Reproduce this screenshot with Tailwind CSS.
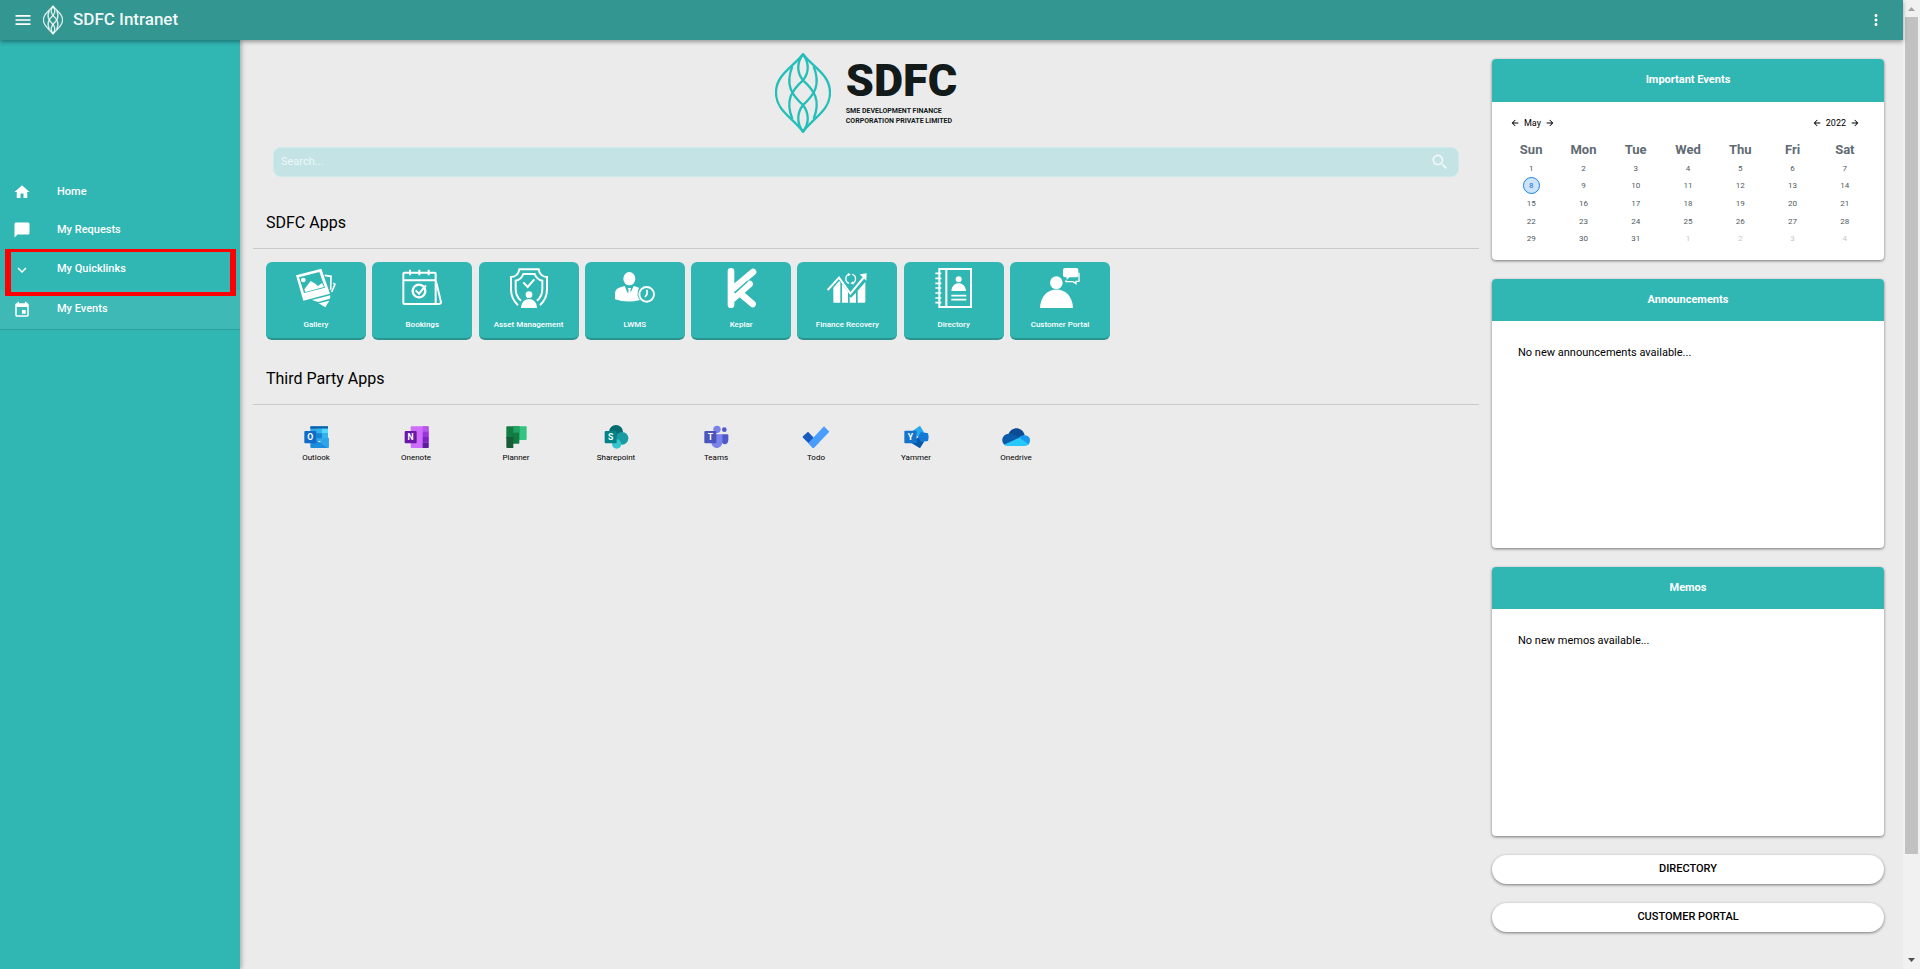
<!DOCTYPE html>
<html lang="en">
<head>
<meta charset="utf-8">
<meta name="viewport" content="width=device-width, initial-scale=1">
<title>SDFC Intranet</title>
<script src="https://cdn.jsdelivr.net/npm/@tailwindcss/browser@4"></script>
</head>
<body class="flex h-screen flex-col overflow-hidden bg-[#ebebeb] font-['Roboto',sans-serif] text-black">
<svg class="hidden" aria-hidden="true">
  <symbol id="leaf" viewBox="0 0 168 240">
    <g fill="none" stroke="currentColor">
      <path d="M84 4C50 46 3 66 3 119S50 192 84 236C118 192 165 172 165 119S118 46 84 4Z"/>
      <path d="M84 4C64 30 66 60 84 82C118 112 138 142 116 198"/>
      <path d="M84 4C104 30 102 60 84 82C50 112 30 142 52 198"/>
      <path d="M84 236C64 210 66 180 84 156C118 126 138 96 116 40"/>
      <path d="M84 236C104 210 102 180 84 156C50 126 30 96 52 40"/>
    </g>
  </symbol>
  <symbol id="left" viewBox="0 0 24 24"><path fill="currentColor" d="M20 11H7.83l5.59-5.59L12 4l-8 8 8 8 1.41-1.41L7.83 13H20v-2z"/></symbol>
  <symbol id="right" viewBox="0 0 24 24"><path fill="currentColor" d="M12 4l-1.41 1.41L16.17 11H4v2h12.17l-5.58 5.59L12 20l8-8z"/></symbol>
</svg>

<div class="flex min-h-0 flex-1">
  <div class="flex min-w-0 flex-1 flex-col">
    <header class="relative z-10 flex h-10 shrink-0 items-center bg-[#339691] pr-[19px] pl-[13px] text-white shadow-[0_2px_4px_rgba(0,0,0,0.35)]">
      <button aria-label="Open menu" class="flex size-5 items-center justify-center">
        <svg class="size-5" viewBox="0 0 24 24"><path fill="currentColor" d="M3 18h18v-2H3v2zm0-5h18v-2H3v2zm0-7v2h18V6H3z"/></svg>
      </button>
      <svg class="ml-[10px] h-[30px] w-5 text-white/80 [stroke-width:12]" aria-hidden="true"><use href="#leaf"/></svg>
      <h1 class="ml-[10px] flex-1 text-[17px] font-medium text-white/95">SDFC Intranet</h1>
      <button aria-label="More options" class="flex size-4 items-center justify-center">
        <svg class="size-[18px] shrink-0" viewBox="0 0 24 24"><path fill="currentColor" d="M12 8c1.1 0 2-.9 2-2s-.9-2-2-2-2 .9-2 2 .9 2 2 2zm0 2c-1.1 0-2 .9-2 2s.9 2 2 2 2-.9 2-2-.9-2-2-2zm0 6c-1.1 0-2 .9-2 2s.9 2 2 2 2-.9 2-2-.9-2-2-2z"/></svg>
      </button>
    </header>

    <div class="flex min-h-0 flex-1">
      <nav class="relative w-60 shrink-0 bg-[#30b6b3] pt-[133px] text-[11px] font-medium text-white shadow-[2px_0_4px_rgba(0,0,0,0.25)]">
        <a href="#" class="flex h-[38px] items-center gap-[26px] pl-[13px]">
          <svg class="size-[18px]" viewBox="0 0 24 24"><path fill="currentColor" d="M10 20v-6h4v6h5v-8h3L12 3 2 12h3v8z"/></svg>Home</a>
        <a href="#" class="flex h-[38px] items-center gap-[26px] pl-[13px]">
          <svg class="size-[18px]" viewBox="0 0 24 24"><path fill="currentColor" d="M20 2H4c-1.100 0-2 .9-2 2v18l4-4h14c1.100 0 2-.9 2-2V4c0-1.100-.9-2-2-2z"/></svg>My Requests</a>
        <div class="relative h-[41px]">
          <a href="#" class="flex h-full items-center gap-[26px] pl-[13px]">
            <svg class="size-[18px]" viewBox="0 0 24 24"><path fill="currentColor" d="M7.410 8.590L12 13.170l4.590-4.580L18 10l-6 6-6-6z"/></svg>My Quicklinks</a>
          <span class="pointer-events-none absolute top-0 right-1 left-[5px] z-10 h-[47px] border-x-[6px] border-t-[3px] border-b-4 border-[#fe0000]"></span>
        </div>
        <a href="#" class="flex h-10 items-center gap-[26px] border-b border-[#2a9f9c] bg-[#3eb9b6] pl-[13px]">
          <svg class="size-[18px]" viewBox="0 0 24 24"><path fill="currentColor" d="M17 12h-5v5h5v-5zM16 1v2H8V1H6v2H5c-1.110 0-1.990.9-1.990 2L3 19c0 1.100.89 2 2 2h14c1.100 0 2-.9 2-2V5c0-1.100-.9-2-2-2h-1V1h-2zm3 18H5V8h14v11z"/></svg>My Events</a>
      </nav>

      <main class="flex min-w-0 flex-1 gap-[13px] pr-[19px] pl-[13px]">
        <div class="min-w-0 flex-1">
          <div class="flex items-center justify-center gap-[15px] pt-[13px]">
            <svg class="h-20 w-14 text-[#25bfb9] [stroke-width:7]" aria-hidden="true"><use href="#leaf"/></svg>
            <div class="text-[#131a1a]">
              <div class="text-[45px]/[42px] font-black">SDFC</div>
              <div class="pt-1 text-[7px]/[10px] font-bold whitespace-nowrap">SME DEVELOPMENT FINANCE<br>CORPORATION PRIVATE LIMITED</div>
            </div>
          </div>

          <form class="mx-5 mt-[14px] flex h-[30px] items-center rounded-lg border border-[#cdebec] bg-[#c3e3e5] pr-2 pl-[7px] text-white">
            <input type="search" aria-label="Search" placeholder="Search..." class="min-w-0 flex-1 bg-transparent text-[11px] outline-none placeholder:text-white/75">
            <button type="button" aria-label="Search" class="size-5 text-white/75">
              <svg class="size-5" viewBox="0 0 24 24"><path fill="currentColor" d="M15.500 14h-.79l-.28-.27C15.410 12.590 16 11.110 16 9.500 16 5.910 13.090 3 9.500 3S3 5.910 3 9.500 5.910 16 9.500 16c1.610 0 3.090-.59 4.230-1.570l.27.28v.79l5 4.990L20.490 19l-4.990-5zm-6 0C7.010 14 5 11.990 5 9.500S7.010 5 9.500 5 14 7.010 14 9.500 11.990 14 9.500 14z"/></svg>
            </button>
          </form>

          <section>
            <h2 class="mt-[34px] px-[13px] text-base/6">SDFC Apps</h2>
            <hr class="mt-[13px] border-[#cacaca]">
            <div class="ml-[13px] mt-[13px] flex max-w-[844px] justify-between text-[8px]/[10px] font-medium text-white">
              <a href="#" class="flex h-[78px] w-[100px] flex-col items-center justify-between rounded-md border-b-2 border-[#2a938f] bg-[#30b6b3] pt-1.5 pb-2">
                <svg class="size-10" viewBox="0 0 120 120" fill="currentColor"><path fill-rule="evenodd" d="M0 22L76 2L102 77L22 98ZM9 28L24 75L87 59L70 12Z"/><path d="M25 64L44 39L56 46L66 54L78 45L84 57L28 72Z"/><circle cx="22" cy="36" r="7"/><path fill="none" stroke="currentColor" stroke-width="5" d="M86 22L105 25L104 65M112 46L117 49L107 72"/><path d="M48 96L103 82L102 92L66 102ZM68 106L100 98L88 118Z"/></svg>
                Gallery</a>
              <a href="#" class="flex h-[78px] w-[100px] flex-col items-center justify-between rounded-md border-b-2 border-[#2a938f] bg-[#30b6b3] pt-1.5 pb-2">
                <svg class="size-10" viewBox="0 0 120 120" fill="none" stroke="currentColor" stroke-width="6"><rect x="4" y="14" width="97" height="94" rx="3"/><path d="M4 37H101M24 5V22M52 5V22M80 5V22M102 40L117 102Q117 108 110 108H95"/><circle cx="51" cy="69" r="19" stroke-width="7"/><path d="M41 67L51 77L72 52"/></svg>
                Bookings</a>
              <a href="#" class="flex h-[78px] w-[100px] flex-col items-center justify-between rounded-md border-b-2 border-[#2a938f] bg-[#30b6b3] pt-1.5 pb-2">
                <svg class="size-10" viewBox="0 0 120 120" fill="none" stroke="currentColor" stroke-width="6"><path d="M27 112C12 98 6 84 6 64V27C20 27 29 17 31 4H89C91 17 100 27 114 27V64C114 84 108 98 93 112"/><path d="M36 98C24 88 20 78 20 62V38C31 36 39 29 43 18H77C81 29 89 36 100 38V62C100 78 96 88 84 98"/><path d="M43 43L56 57L76 34"/><circle cx="60" cy="80" r="10" fill="currentColor" stroke="none"/><path fill="currentColor" stroke="none" d="M36 120C37 84 83 84 84 120Z"/></svg>
                Asset Management</a>
              <a href="#" class="flex h-[78px] w-[100px] flex-col items-center justify-between rounded-md border-b-2 border-[#2a938f] bg-[#30b6b3] pt-1.5 pb-2">
                <svg class="size-10" viewBox="0 0 120 120" fill="currentColor"><ellipse cx="43" cy="32" rx="18" ry="20"/><path d="M0 94V77Q0 62 16 58L29 54L42 84L56 54L72 59Q62 82 75 96Q38 106 0 94Z"/><path d="M38 60H49L46 66L49 84L43 92L38 84L41 66Z"/><circle cx="95" cy="79" r="22" fill="none" stroke="currentColor" stroke-width="6"/><path d="M96 65V79L90 87" fill="none" stroke="currentColor" stroke-width="5"/></svg>
                LWMS</a>
              <a href="#" class="flex h-[78px] w-[100px] flex-col items-center justify-between rounded-md border-b-2 border-[#2a938f] bg-[#30b6b3] pt-1.5 pb-2">
                <svg class="size-10" viewBox="0 0 120 120" fill="none" stroke="currentColor" stroke-width="20" stroke-linecap="round"><path d="M30 10V110M32 66L96 12M36 92L86 48M62 80L95 108"/><path stroke="#30b6b3" stroke-width="4" d="M42 74L80 40"/></svg>
                Keplar</a>
              <a href="#" class="flex h-[78px] w-[100px] flex-col items-center justify-between rounded-md border-b-2 border-[#2a938f] bg-[#30b6b3] pt-1.5 pb-2">
                <svg class="size-10" viewBox="0 0 120 120" fill="currentColor"><path d="M19 59L36 40L40 42V104H22Q19 104 19 101ZM45 48L63 72V104H45ZM68 86L72 89L87 74V104H68ZM92 68L115 42V101Q115 104 112 104H92Z"/><path fill="none" stroke="currentColor" stroke-width="6" d="M2 66L36 29L70 77L114 24"/><path d="M98 19L119 16L118 38Z"/><path fill="none" stroke="currentColor" stroke-width="4" d="M66 46A13 14 0 0 1 66 19M76 19A13 14 0 0 1 76 46"/><path d="M62 15L72 19L64 25ZM80 50L70 46L78 40Z"/></svg>
                Finance Recovery</a>
              <a href="#" class="flex h-[78px] w-[100px] flex-col items-center justify-between rounded-md border-b-2 border-[#2a938f] bg-[#30b6b3] pt-1.5 pb-2">
                <svg class="size-10" viewBox="0 0 120 120" fill="none" stroke="currentColor" stroke-width="6"><path d="M16 3H111V117H16ZM37 3V117"/><path stroke-width="5" d="M4 16H22M4 31H22M4 46H22M4 60H22M4 75H22M4 90H22M4 104H22"/><circle cx="74" cy="34" r="9" fill="currentColor" stroke="none"/><path fill="currentColor" stroke="none" d="M52 69C54 38 94 38 96 69Z"/><path stroke-width="5" d="M52 83H97M52 95H97"/></svg>
                Directory</a>
              <a href="#" class="flex h-[78px] w-[100px] flex-col items-center justify-between rounded-md border-b-2 border-[#2a938f] bg-[#30b6b3] pt-1.5 pb-2">
                <svg class="size-10" viewBox="0 0 120 120" fill="currentColor"><circle cx="49" cy="44" r="19"/><path d="M0 120C2 46 97 46 99 120Z"/><path d="M75 0H109Q115 0 115 6V22Q115 28 109 28H88L80 36V28H75Q69 28 69 22V6Q69 0 75 0Z"/><path fill="none" stroke="currentColor" stroke-width="4" d="M117 14V40H108V47L99 41H78V37"/></svg>
                Customer Portal</a>
            </div>
          </section>

          <section>
            <h2 class="mt-[27px] px-[13px] text-base/6">Third Party Apps</h2>
            <hr class="mt-[13px] border-[#cacaca]">
            <div class="ml-[13px] mt-5 flex text-[8px]/[10px]">
              <a href="#" class="flex w-[100px] flex-col items-center gap-1">
                <svg class="h-6 w-7" viewBox="0 0 84 72"><rect x="25" y="4" width="53" height="44" rx="3" fill="#32a9e7"/><path d="M25 4H78V11H25Z" fill="#0f5fa8"/><path d="M43 11H60V25H43Z" fill="#38b0ee"/><path d="M60 11H78V25H60Z" fill="#50d9ff"/><path d="M43 25H60V40H43Z" fill="#1584d6"/><path d="M60 25H78V40H60Z" fill="#32b0f0"/><path d="M25 36L52 52L80 38V66Q80 69 77 69H28Q25 69 25 66Z" fill="#1d8ddf"/><path d="M52 52L80 38V66Q80 69 77 69Z" fill="#2ba6ec"/><rect x="7" y="18" width="36" height="37" rx="3" fill="#0f6cc8"/><text x="25" y="45" text-anchor="middle" font-size="26" font-weight="700" fill="#fff">O</text></svg>
                Outlook</a>
              <a href="#" class="flex w-[100px] flex-col items-center gap-1">
                <svg class="h-6 w-7" viewBox="0 0 84 72"><rect x="26" y="4" width="54" height="65" rx="3" fill="#ce6cfc"/><path d="M62 4H77Q80 4 80 7V20H62Z" fill="#b557e8"/><path d="M62 20H80V36H62Z" fill="#9837d8"/><path d="M62 36H80V53H62Z" fill="#7d22c4"/><path d="M62 53H80V66Q80 69 77 69H62Z" fill="#5b1f9b"/><rect x="8" y="18" width="36" height="37" rx="3" fill="#6b17a5"/><text x="26" y="45" text-anchor="middle" font-size="26" font-weight="700" fill="#fff">N</text></svg>
                Onenote</a>
              <a href="#" class="flex w-[100px] flex-col items-center gap-1">
                <svg class="h-6 w-7" viewBox="0 0 84 72"><path d="M51 4H71Q74 4 74 7V42Q74 45 71 45H51Z" fill="#33c481"/><path d="M33 4H52V54Q52 56 50 56H33Z" fill="#107c41"/><path d="M33 4H52V23H33Z" fill="#21a366"/><path d="M13 7Q13 4 16 4H34V40H13Z" fill="#117d42"/><path d="M13 36H34V69H16Q13 69 13 66Z" fill="#185c37"/></svg>
                Planner</a>
              <a href="#" class="flex w-[100px] flex-col items-center gap-1">
                <svg class="h-6 w-7" viewBox="0 0 84 72"><circle cx="42" cy="21" r="21" fill="#036c70"/><circle cx="60" cy="40" r="19" fill="#1a9ba1"/><circle cx="44" cy="57" r="14" fill="#37c6d0"/><rect x="8" y="18" width="36" height="37" rx="3" fill="#048387"/><text x="26" y="45" text-anchor="middle" font-size="26" font-weight="700" fill="#fff">S</text></svg>
                Sharepoint</a>
              <a href="#" class="flex w-[100px] flex-col items-center gap-1">
                <svg class="h-6 w-7" viewBox="0 0 84 72"><circle cx="67" cy="14" r="7" fill="#5059c9"/><circle cx="45" cy="13" r="11" fill="#7b83eb"/><path d="M58 28H76Q79 28 79 31V45C79 62 58 62 58 45Z" fill="#5059c9"/><path d="M28 28H58Q61 28 61 31V50C61 75 28 75 28 50Z" fill="#7b83eb"/><rect x="7" y="18" width="36" height="37" rx="3" fill="#4b53bc"/><text x="25" y="45" text-anchor="middle" font-size="26" font-weight="700" fill="#fff">T</text></svg>
                Teams</a>
              <a href="#" class="flex w-[100px] flex-col items-center gap-1">
                <svg class="h-6 w-7" viewBox="0 0 84 72"><path d="M18 20L50 53L34 69L3 38Q1 36 3 34Z" fill="#185abd"/><path d="M66 4L82 20L36 68Q34 70 31 68L19 54Z" fill="#4a9cfd"/></svg>
                Todo</a>
              <a href="#" class="flex w-[100px] flex-col items-center gap-1">
                <svg class="h-6 w-7" viewBox="0 0 84 72"><path d="M54 2L66 22L50 36L28 20Z" fill="#29a8ec"/><path d="M54 70L66 50L50 36L28 54Z" fill="#0558a8"/><path d="M48 36L57 21L78 25Q82 36 78 48L57 51Z" fill="#1379d6"/><rect x="7" y="17" width="37" height="38" rx="3" fill="#1474cc"/><text x="25" y="45" text-anchor="middle" font-size="26" font-weight="700" fill="#fff">Y</text></svg>
                Yammer</a>
              <a href="#" class="flex w-[100px] flex-col items-center gap-1">
                <svg class="h-6 w-7" viewBox="0 0 84 72"><path d="M19 28C27 4 60 2 68 30L48 44Z" fill="#0b4a94"/><path d="M2 52C-3 38 8 26 20 27C30 25 38 29 44 34L55 40L8 60Q4 57 2 52Z" fill="#0a5cab"/><path d="M50 38C62 26 84 30 84 46Q84 56 78 60Z" fill="#1799ec"/><path d="M6 59L52 38L80 58Q76 63 68 63H18Q10 63 6 59Z" fill="#28c8fb"/></svg>
                Onedrive</a>
            </div>
          </section>
        </div>

        <aside class="flex w-[392px] shrink-0 flex-col gap-[19px] pt-[19px] text-[11px]">
          <section class="overflow-clip rounded bg-white pb-[13px] shadow-[0_1px_3px_rgba(0,0,0,0.5)]">
            <h2 class="flex h-[43px] items-center justify-center bg-[#30b6b3] font-bold text-white">Important Events</h2>
            <div class="flex items-center justify-between pt-[13px] pr-6 pl-[18px] text-[9px]/4">
              <div class="flex items-center gap-1">
                <button aria-label="Previous month"><svg class="size-[10px]"><use href="#left"/></svg></button>May
                <button aria-label="Next month"><svg class="size-[10px]"><use href="#right"/></svg></button>
              </div>
              <div class="flex items-center gap-1">
                <button aria-label="Previous year"><svg class="size-[10px]"><use href="#left"/></svg></button>2022
                <button aria-label="Next year"><svg class="size-[10px]"><use href="#right"/></svg></button>
              </div>
            </div>
            <table class="mx-[13px] mt-2 w-[366px] table-fixed text-center text-[8px]/[17px] text-[#4f5a62]">
              <thead class="text-[13px]/5 text-[#5f6b73]"><tr class="h-[21px]"><th>Sun</th><th>Mon</th><th>Tue</th><th>Wed</th><th>Thu</th><th>Fri</th><th>Sat</th></tr></thead>
              <tbody>
                <tr><td>1</td><td>2</td><td>3</td><td>4</td><td>5</td><td>6</td><td>7</td></tr>
                <tr><td><span class="mx-auto flex size-[17px] items-center justify-center rounded-full border border-[#1a84e0] bg-[#cce4fb] text-[#1a6fc4]">8</span></td><td>9</td><td>10</td><td>11</td><td>12</td><td>13</td><td>14</td></tr>
                <tr class="h-[18px]"><td>15</td><td>16</td><td>17</td><td>18</td><td>19</td><td>20</td><td>21</td></tr>
                <tr class="h-[18px]"><td>22</td><td>23</td><td>24</td><td>25</td><td>26</td><td>27</td><td>28</td></tr>
                <tr><td>29</td><td>30</td><td>31</td><td class="text-[#c3c8cc]">1</td><td class="text-[#c3c8cc]">2</td><td class="text-[#c3c8cc]">3</td><td class="text-[#c3c8cc]">4</td></tr>
              </tbody>
            </table>
          </section>
          <section class="min-h-[269px] overflow-clip rounded bg-white shadow-[0_1px_3px_rgba(0,0,0,0.5)]">
            <h2 class="flex h-[42px] items-center justify-center bg-[#30b6b3] font-bold text-white">Announcements</h2>
            <p class="px-[26px] pt-6 leading-4">No new announcements available...</p>
          </section>
          <section class="min-h-[269px] overflow-clip rounded bg-white shadow-[0_1px_3px_rgba(0,0,0,0.5)]">
            <h2 class="flex h-[42px] items-center justify-center bg-[#30b6b3] font-bold text-white">Memos</h2>
            <p class="px-[26px] pt-6 leading-4">No new memos available...</p>
          </section>
          <button class="h-[29px] shrink-0 rounded-full bg-white font-medium shadow-[0_1px_3px_rgba(0,0,0,0.5)]">DIRECTORY</button>
          <button class="h-[29px] shrink-0 rounded-full bg-white font-medium shadow-[0_1px_3px_rgba(0,0,0,0.5)]">CUSTOMER PORTAL</button>
        </aside>
      </main>
    </div>
  </div>

  <div class="flex w-[17px] shrink-0 flex-col items-center bg-[#f1f1f1]" aria-hidden="true">
    <svg class="h-[17px] w-[17px] shrink-0" viewBox="0 0 17 17"><path d="M5 11L8.500 7L12 11Z" fill="#a3a3a3"/></svg>
    <div class="w-[13px] flex-[837] bg-[#c1c1c1]"></div>
    <div class="flex-[98]"></div>
    <svg class="h-[17px] w-[17px] shrink-0" viewBox="0 0 17 17"><path d="M5 6L8.500 10L12 6Z" fill="#505050"/></svg>
  </div>
</div>
</body>
</html>
